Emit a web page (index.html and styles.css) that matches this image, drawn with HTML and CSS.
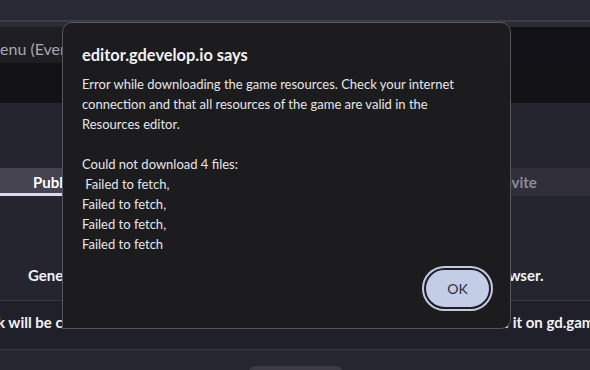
FILE: index.html
```html
<!DOCTYPE html>
<html lang="en">
<head>
  <meta charset="UTF-8">
  <meta name="viewport" content="width=device-width, initial-scale=1.0">
  <title>GDevelop - Share</title>
  <link rel="stylesheet" href="styles.css">
</head>
<body>
  <div class="app">
    <header class="titlebar"></header>

    <div class="editor-tabs">
      <div class="editor-tab">enu (Events)</div>
    </div>
    <div class="toolbar"></div>

    <main class="share">
      <div class="share-tabs">
        <div class="share-tab active">Publish</div>
        <div class="share-tab">Invite</div>
      </div>

      <p class="share-desc">
        <span class="desc-start">Generate a link</span>
        <span class="desc-end">browser.</span>
      </p>

      <div class="share-row">
        <span class="row-start">k will be created</span>
        <span class="row-end">share it on gd.games</span>
      </div>

      <div class="share-footer">
        <div class="footer-button"></div>
      </div>
    </main>

    <!-- native alert() dialog -->
    <div class="alert">
      <div class="alert-title">editor.gdevelop.io says</div>
      <div class="alert-message">Error while downloading the game resources. Check your internet
connection and that all resources of the game are valid in the
Resources editor.

Could not download 4 files:
 Failed to fetch,
Failed to fetch,
Failed to fetch,
Failed to fetch</div>
      <div class="alert-actions">
        <button class="alert-ok">OK</button>
      </div>
    </div>
  </div>
</body>
</html>
```

FILE: styles.css
```css
body, html {
  margin: 0;
  padding: 0;
  width: 100%;
  height: 100%;
  overflow: hidden;
  background-color: #262630;
  font-family: 'Lato', sans-serif;
}

.app {
  position: relative;
  width: 590px;
  height: 370px;
  overflow: hidden;
  display: flex;
  flex-direction: column;
}

.app > * {
  flex-shrink: 0;
}

.titlebar {
  height: 20px;
  background-color: #282a35;
  border-bottom: 2px solid #3a3c47;
}

.editor-tabs {
  display: flex;
  height: 36px;
  padding-top: 5px;
  background-color: #2a2c37;
}

.editor-tab {
  width: 130px;
  padding-top: 12px;
  background-color: #1e1e23;
  color: #a9a9b1;
  font-size: 16px;
  white-space: nowrap;
  overflow: hidden;
}

.editor-tabs::after {
  content: '';
  flex: 1;
  background-color: #121117;
}

.toolbar {
  height: 40px;
  background-color: #131217;
}

.share {
  flex: 1;
  display: flex;
  flex-direction: column;
  background-color: #252530;
  padding-top: 65px;
  overflow: hidden;
}

.share > * {
  flex-shrink: 0;
}

.share-tabs {
  display: flex;
  justify-content: space-between;
  height: 28px;
}

.share-tab {
  width: 100px;
  box-sizing: border-box;
  padding: 5px 0 0 9px;
  font-size: 15px;
  font-weight: 700;
  color: #8d8c97;
  background-color: #302f3a;
  white-space: nowrap;
  overflow: hidden;
}

.share-tab.active {
  width: 150px;
  padding-left: 33px;
  color: #ffffff;
  background-color: #45434f;
  border-bottom: 3px solid #ddd8f0;
}

.share-desc {
  display: flex;
  margin: 0;
  padding: 70px 0 16px;
  font-size: 15px;
  font-weight: 700;
  color: #f2f2f5;
  white-space: nowrap;
  border-bottom: 1px solid #393945;
}

.desc-start {
  flex-shrink: 0;
  width: 458px;
  padding-left: 28px;
}

.share-row {
  display: flex;
  height: 49px;
  box-sizing: border-box;
  padding-top: 12px;
  font-size: 15px;
  font-weight: 700;
  color: #f2f2f5;
  white-space: nowrap;
  background-color: #20202a;
  border-bottom: 1px solid #393945;
  overflow: hidden;
}

.row-start {
  flex-shrink: 0;
  width: 473px;
  text-indent: -3px;
}

.row-end {
  flex-shrink: 0;
}

.share-footer {
  flex: 1;
  display: flex;
  justify-content: center;
  padding-top: 16px;
  background-color: #262630;
}

.footer-button {
  width: 95px;
  height: 30px;
  border-radius: 8px;
  background-color: #3c3b46;
}

/* browser alert */
.alert {
  position: absolute;
  left: 62px;
  top: 22px;
  width: 449px;
  height: 307px;
  box-sizing: border-box;
  padding: 21px 19px 0;
  background-color: #1c1b1e;
  border: 1px solid #57565c;
  border-radius: 10px 10px 10px 0;
  font-family: 'Lato', sans-serif;
  color: #e6e6e8;
}

.alert-title {
  font-size: 16.4px;
  font-weight: 700;
  line-height: 22px;
  color: #f1f1f3;
}

.alert-message {
  margin-top: 8px;
  font-size: 13px;
  line-height: 20px;
  white-space: pre;
}

.alert-actions {
  display: flex;
  justify-content: flex-end;
  padding-top: 14px;
}

.alert-ok {
  width: 67px;
  height: 41px;
  border: 2px solid #1d1c2a;
  border-radius: 22px;
  outline: 2px solid #c4cadb;
  background-color: #c3cde6;
  color: #2b2e44;
  font-family: 'Lato', sans-serif;
  font-size: 14px;
}
```
